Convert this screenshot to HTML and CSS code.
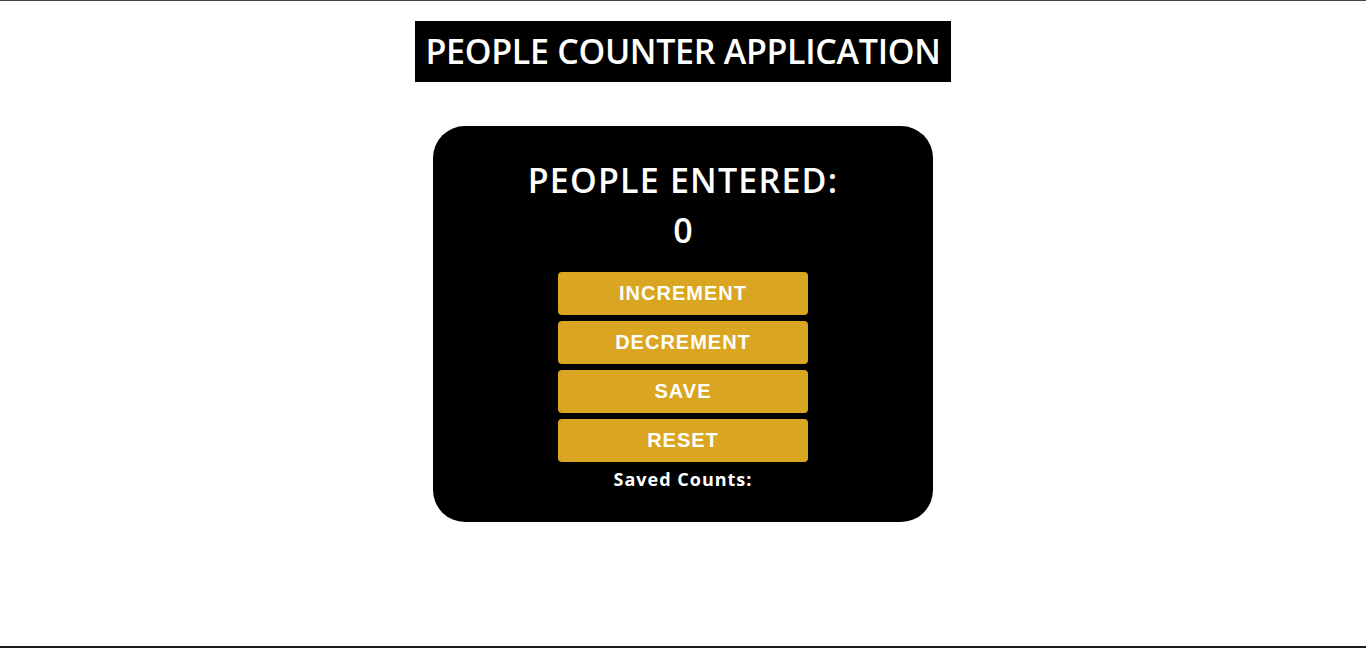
FILE: index.html
```html
<!DOCTYPE html>
<html lang="en">
<head>
<meta charset="utf-8">
<title>People Counter Application</title>
<link rel="stylesheet" href="styles.css">
</head>
<body>
<div class="page">
  <h1 class="title">PEOPLE COUNTER APPLICATION</h1>
  <main class="card">
    <h2 class="label">PEOPLE ENTERED:</h2>
    <div class="count">0</div>
    <div class="buttons">
      <button class="btn">INCREMENT</button>
      <button class="btn">DECREMENT</button>
      <button class="btn">SAVE</button>
      <button class="btn">RESET</button>
    </div>
    <p class="saved">Saved Counts:</p>
  </main>
</div>
</body>
</html>
```
FILE: styles.css
```css
html, body {
  margin: 0;
  padding: 0;
  background: #fff;
}
.page {
  box-sizing: border-box;
  height: 648px;
  border-top: 1px solid #444;
  border-bottom: 2px solid #1c1c1c;
  display: flex;
  flex-direction: column;
  align-items: center;
  font-family: "Open Sans", "DejaVu Sans", sans-serif;
}
.title {
  margin: 20px 0 0;
  background: #000;
  color: #fff;
  font-size: 34px;
  font-weight: 600;
  line-height: 61px;
  padding: 0 10px;
  letter-spacing: -0.3px;
}
.card {
  margin-top: 44px;
  width: 500px;
  height: 396px;
  box-sizing: border-box;
  background: #000;
  border-radius: 32px;
  display: flex;
  flex-direction: column;
  align-items: center;
  padding-top: 32px;
  color: #fff;
}
.label {
  margin: 0;
  font-size: 34px;
  font-weight: 600;
  line-height: 44px;
  letter-spacing: 1.2px;
}
.count {
  font-size: 34px;
  font-weight: 600;
  line-height: 44px;
  margin-top: 6px;
}
.buttons {
  margin-top: 20px;
  display: flex;
  flex-direction: column;
  gap: 6px;
}
.btn {
  width: 250px;
  height: 43px;
  border: none;
  border-radius: 4px;
  background: #daa520;
  color: #fff;
  font-family: "Liberation Sans", Arial, sans-serif;
  font-size: 20px;
  font-weight: 700;
  letter-spacing: 1px;
  padding: 0;
}
.saved {
  margin: 6px 0 0;
  font-size: 18px;
  font-weight: 700;
  line-height: 22px;
  letter-spacing: 1px;
}
```
